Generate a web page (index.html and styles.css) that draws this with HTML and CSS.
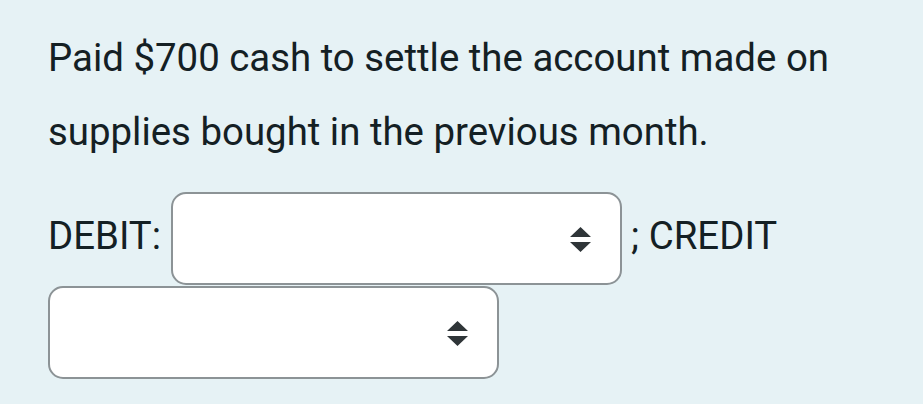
FILE: index.html
```html
<!DOCTYPE html>
<html>
<head>
<meta charset="utf-8">
<link rel="stylesheet" href="styles.css">
</head>
<body>
<div class="question">
  <p class="prompt">Paid $700 cash to settle the account made on supplies bought in the previous month.</p>
  <div class="answer">DEBIT: <span class="sel-wrap"><select class="sel"><option></option></select><svg class="arrows" width="21" height="25" viewBox="0 0 21 25"><path d="M10.5 0 L21 10 L0 10 Z M0 15 L21 15 L10.5 25 Z" fill="#2f3538"/></svg></span> ; CREDIT <span class="sel-wrap"><select class="sel"><option></option></select><svg class="arrows" width="21" height="25" viewBox="0 0 21 25"><path d="M10.5 0 L21 10 L0 10 Z M0 15 L21 15 L10.5 25 Z" fill="#2f3538"/></svg></span></div>
</div>
</body>
</html>
```
FILE: styles.css
```css
html, body {
  margin: 0;
  padding: 0;
  background: #e6f2f5;
}
body {
  font-family: Roboto, "Liberation Sans", sans-serif;
  color: #142024;
}
.question {
  padding: 21px 40px 0 48px;
  width: 835px;
}
.prompt {
  margin: 0;
  font-size: 38.4px;
  line-height: 74px;
}
.answer {
  font-size: 38.4px;
  line-height: 80px;
  margin-top: 23px;
}
.sel-wrap {
  position: relative;
  display: inline-block;
  vertical-align: middle;
  width: 451px;
  height: 93px;
  margin-bottom: 1px;
}
.sel {
  appearance: none;
  -webkit-appearance: none;
  box-sizing: border-box;
  width: 451px;
  height: 93px;
  margin: 0;
  border: 2px solid #8c9396;
  border-radius: 15px;
  background: #ffffff;
  display: block;
}
.arrows {
  position: absolute;
  right: 31px;
  top: 35px;
}
```
